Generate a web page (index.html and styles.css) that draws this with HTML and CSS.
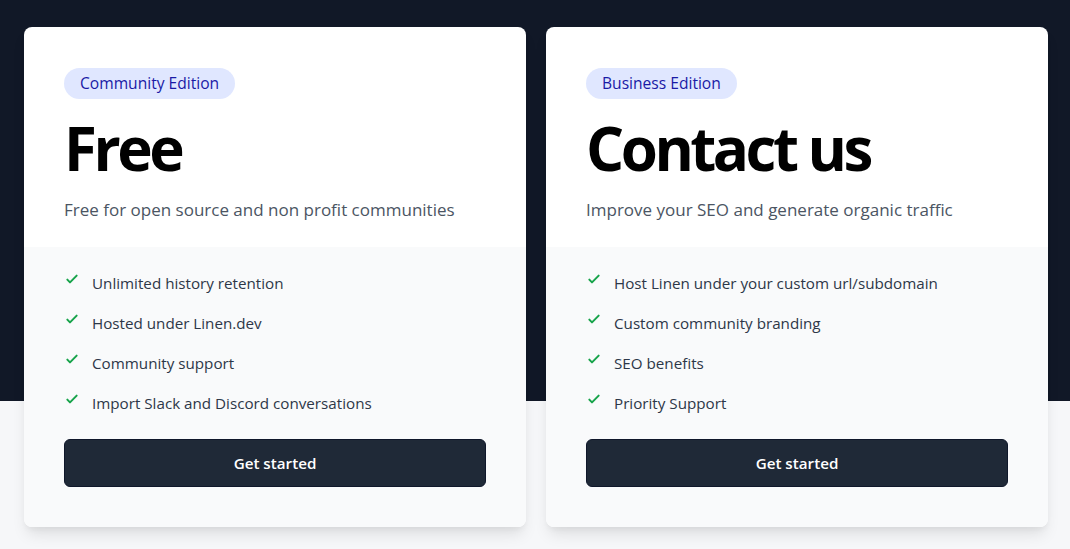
FILE: index.html
```html
<!DOCTYPE html>
<html lang="en">
<head>
    <meta charset="UTF-8">
    <meta name="viewport" content="width=device-width, initial-scale=1.0">
    <title>Pricing - Linen</title>
    <link rel="stylesheet" href="styles.css">
</head>
<body>
    <section class="pricing">
        <div class="plans">
            <div class="plan">
                <div class="plan-head">
                    <span class="badge">Community Edition</span>
                    <h2 class="price">Free</h2>
                    <p class="summary">Free for open source and non profit communities</p>
                </div>
                <div class="plan-body">
                    <ul class="features">
                        <li>
                            <svg class="check" viewBox="0 0 24 24"><path d="M5 13l4 4L19 7"/></svg>
                            <span>Unlimited history retention</span>
                        </li>
                        <li>
                            <svg class="check" viewBox="0 0 24 24"><path d="M5 13l4 4L19 7"/></svg>
                            <span>Hosted under Linen.dev</span>
                        </li>
                        <li>
                            <svg class="check" viewBox="0 0 24 24"><path d="M5 13l4 4L19 7"/></svg>
                            <span>Community support</span>
                        </li>
                        <li>
                            <svg class="check" viewBox="0 0 24 24"><path d="M5 13l4 4L19 7"/></svg>
                            <span>Import Slack and Discord conversations</span>
                        </li>
                    </ul>
                    <a class="cta" href="#">Get started</a>
                </div>
            </div>
            <div class="plan">
                <div class="plan-head">
                    <span class="badge">Business Edition</span>
                    <h2 class="price">Contact us</h2>
                    <p class="summary">Improve your SEO and generate organic traffic</p>
                </div>
                <div class="plan-body">
                    <ul class="features">
                        <li>
                            <svg class="check" viewBox="0 0 24 24"><path d="M5 13l4 4L19 7"/></svg>
                            <span>Host Linen under your custom url/subdomain</span>
                        </li>
                        <li>
                            <svg class="check" viewBox="0 0 24 24"><path d="M5 13l4 4L19 7"/></svg>
                            <span>Custom community branding</span>
                        </li>
                        <li>
                            <svg class="check" viewBox="0 0 24 24"><path d="M5 13l4 4L19 7"/></svg>
                            <span>SEO benefits</span>
                        </li>
                        <li>
                            <svg class="check" viewBox="0 0 24 24"><path d="M5 13l4 4L19 7"/></svg>
                            <span>Priority Support</span>
                        </li>
                    </ul>
                    <a class="cta" href="#">Get started</a>
                </div>
            </div>
        </div>
    </section>
</body>
</html>
```

FILE: styles.css
```css
body {
    margin: 0;
    font-family: "Open Sans", "Noto Sans", sans-serif;
    /* dark band behind the upper part of the cards */
    background: linear-gradient(#111827 0, #111827 401px, #f6f7f9 401px);
    min-height: 549px;
}
.pricing {
    padding: 27px 22px 40px 24px;
}
.plans {
    display: grid;
    grid-template-columns: 1fr 1fr;
    gap: 20px;
}
.plan {
    background-color: #fff;
    border-radius: 8px;
    overflow: hidden;
    box-shadow: 0 10px 15px -3px rgba(0, 0, 0, 0.1), 0 4px 6px -2px rgba(0, 0, 0, 0.05);
}
.plan-head {
    padding: 41px 40px 23px;
}
.badge {
    display: inline-block;
    padding: 3px 16px 4px;
    border-radius: 9999px;
    background-color: #e0e7ff;
    color: #1a1aa6;
    font-size: 15.6px;
    line-height: 24px;
    font-weight: 500;
}
.price {
    margin: 19px 0 0;
    font-size: 60px;
    line-height: 1;
    font-weight: 700;
    color: #000;
    letter-spacing: -3.5px;
}
.summary {
    margin: 18px 0 0;
    font-size: 17px;
    line-height: 28px;
    color: #4b5563;
}
.plan-body {
    background-color: #f9fafb;
    padding: 24px 40px 40px;
}
.features {
    list-style: none;
    margin: 0;
    padding: 0;
}
.features li {
    display: flex;
    align-items: flex-start;
    margin-bottom: 16px;
    font-size: 15.2px;
    line-height: 24px;
    color: #2d3748;
}
.check {
    flex-shrink: 0;
    width: 16px;
    height: 16px;
    margin: 0 12px 0 0;
    fill: none;
    stroke: #16a34a;
    stroke-width: 3;
    stroke-linecap: round;
    stroke-linejoin: round;
}
.cta {
    display: block;
    margin-top: 24px;
    padding: 11px 20px;
    background-color: #1f2937;
    border: 1px solid #0f172a;
    border-radius: 6px;
    color: #fff;
    text-align: center;
    text-decoration: none;
    font-size: 15.2px;
    line-height: 24px;
    font-weight: 600;
}
```
